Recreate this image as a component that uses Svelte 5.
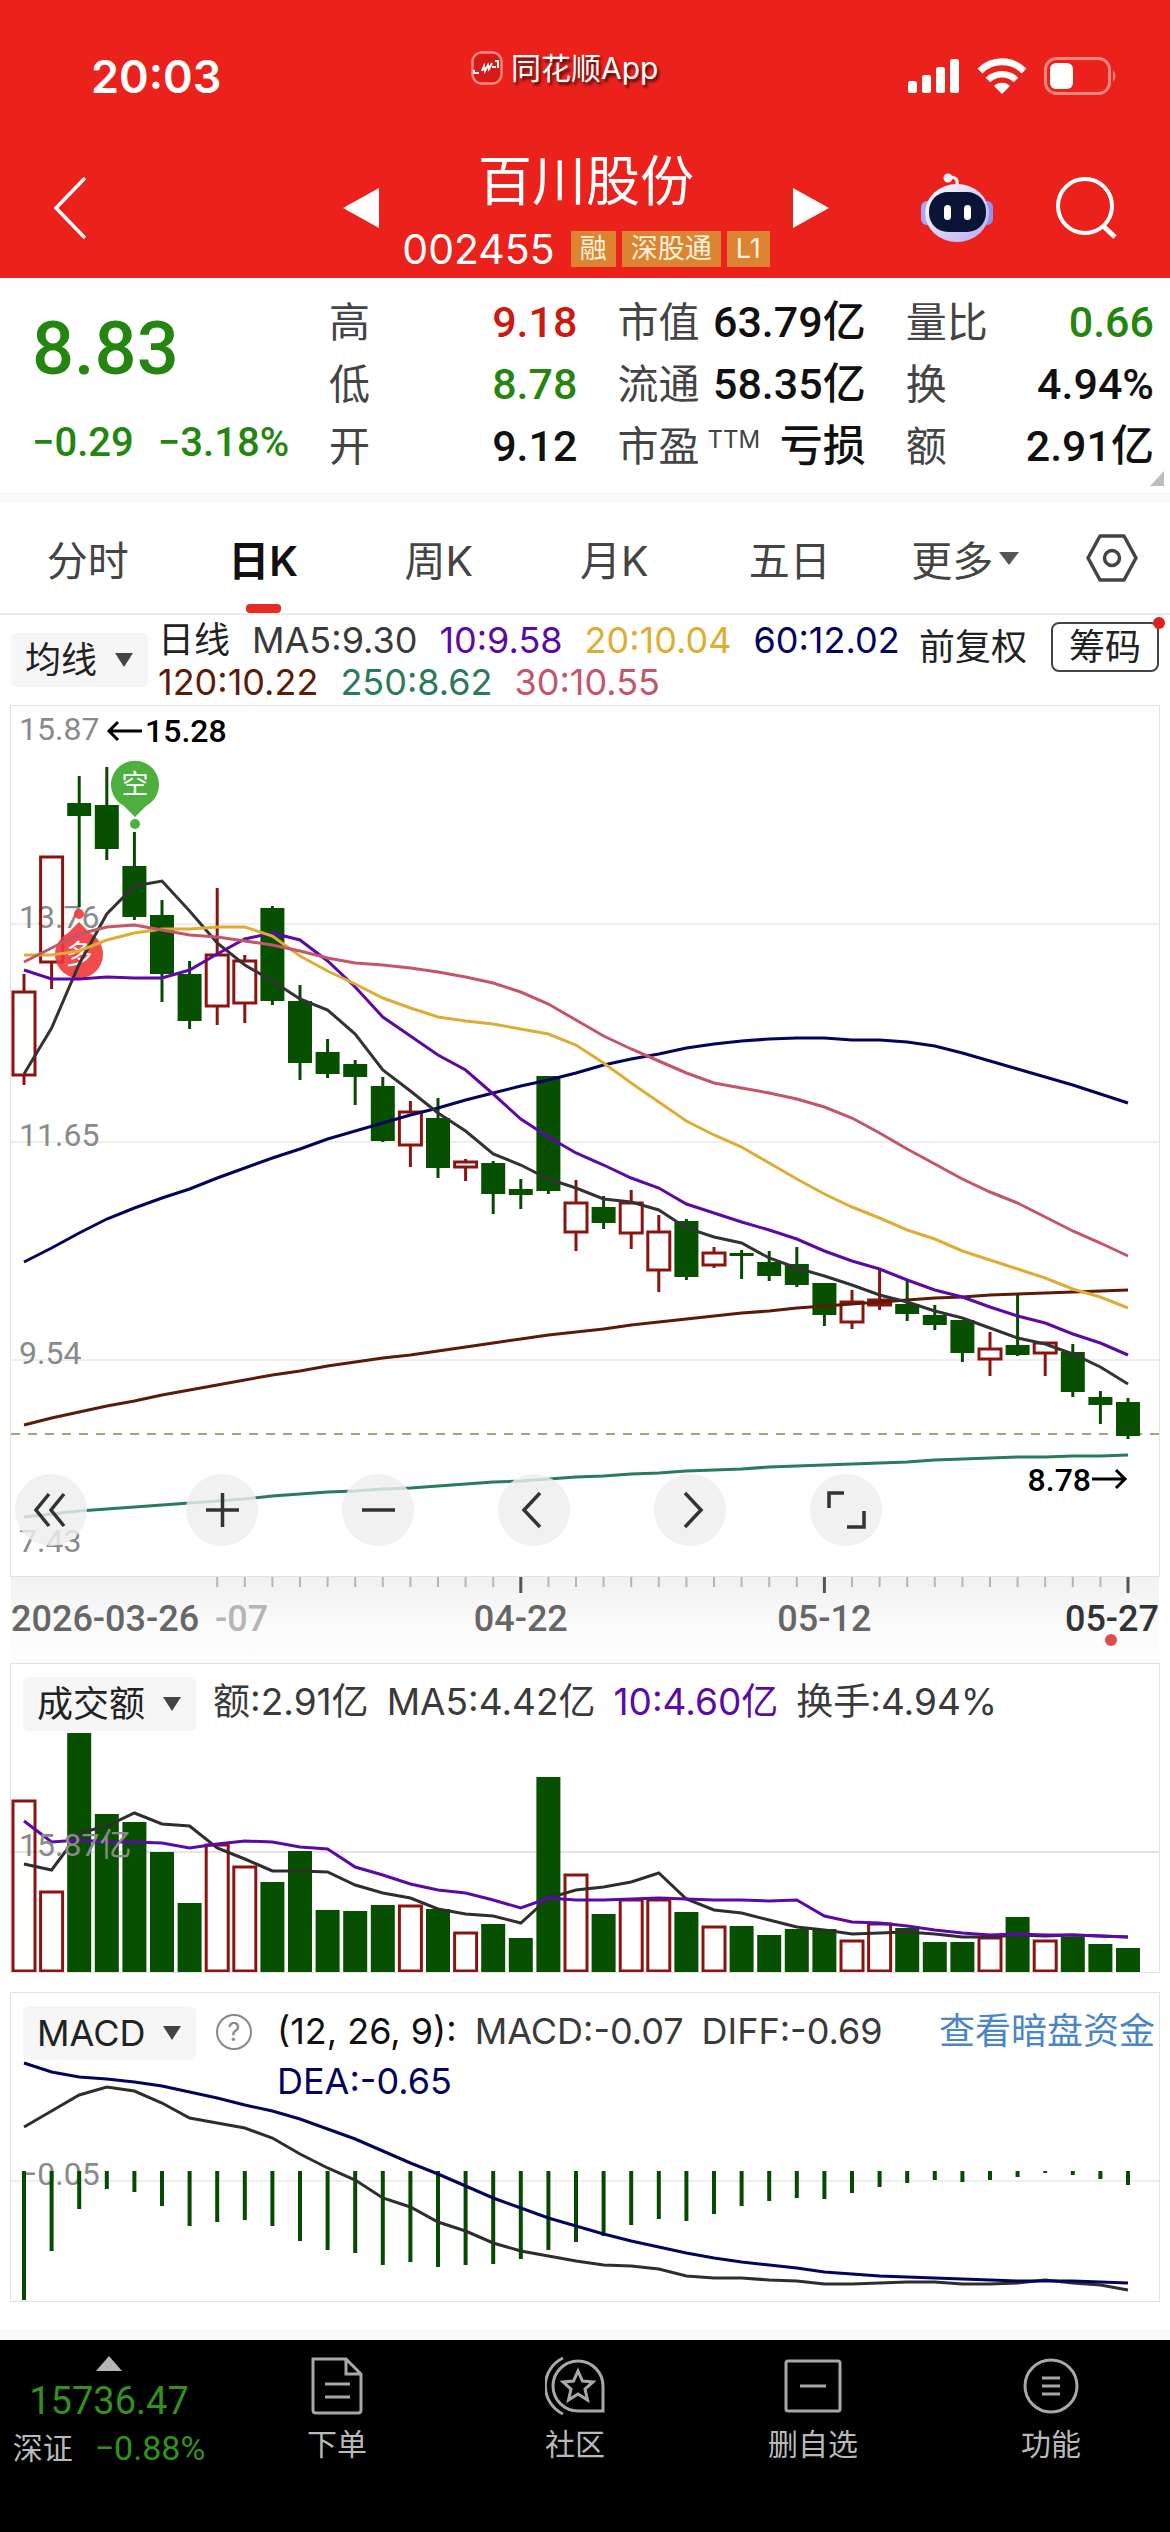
<script lang="ts">
	type Candle = [number, number, number, number, boolean?];

	const X0 = 13;
	const STEP = 27.6;
	const BODY = 24;

	const x = (i: number) => X0 + STEP * i;

	// [body top, body bottom, high, low, rising]
	const candles: Candle[] = [
		[285, 370, 268, 379, true], [150, 257, 150, 283, true], [97, 110, 70, 201], [99, 143, 61, 154],
		[160, 211, 126, 214], [209, 268, 194, 296], [268, 315, 255, 323], [248, 301, 182, 319, true],
		[254, 298, 249, 317, true], [202, 295, 200, 299], [295, 357, 279, 374], [346, 368, 333, 372],
		[358, 371, 354, 399], [380, 435, 371, 436], [405, 440, 395, 461, true], [412, 462, 392, 472],
		[455, 462, 453, 475, true], [457, 488, 455, 508], [483, 489, 473, 503], [370, 485, 370, 488],
		[496, 527, 474, 545, true], [501, 517, 490, 523], [496, 528, 484, 543, true], [525, 565, 509, 586, true],
		[515, 571, 513, 574], [546, 560, 541, 562, true], [547, 550, 544, 573], [556, 570, 545, 575],
		[558, 579, 541, 581], [577, 609, 577, 620], [595, 617, 584, 623, true], [593, 600, 564, 604, true],
		[598, 608, 574, 615], [609, 619, 599, 624], [614, 647, 614, 656], [642, 654, 626, 670, true],
		[639, 649, 589, 650], [636, 648, 636, 670, true], [646, 686, 638, 691], [691, 699, 685, 718],
		[696, 730, 692, 733]
	];

	const ma5 = [368, 322, 258, 208, 180, 175, 205, 237, 259, 275, 293, 304, 328, 364, 385, 407, 425, 448, 459, 473, 482, 493, 496, 504, 522, 531, 537, 552, 562, 570, 579, 589, 596, 605, 612, 622, 632, 638, 648, 661, 678];
	const ma10 = [264, 273, 273, 271, 272, 272, 264, 248, 233, 227, 234, 255, 281, 311, 330, 349, 364, 388, 413, 431, 447, 459, 472, 482, 498, 507, 516, 524, 533, 545, 555, 563, 574, 584, 591, 601, 610, 617, 628, 637, 649];
	const ma20 = [249, 249, 245, 234, 227, 223, 223, 221, 221, 230, 250, 265, 278, 292, 302, 311, 315, 318, 323, 328, 339, 357, 377, 396, 415, 429, 441, 457, 473, 488, 501, 512, 524, 533, 545, 554, 563, 572, 583, 591, 602];
	const ma30 = [256, 242, 228, 221, 219, 224, 229, 231, 235, 239, 245, 252, 257, 259, 262, 266, 271, 277, 286, 298, 314, 330, 343, 355, 367, 377, 382, 387, 393, 401, 412, 427, 443, 458, 473, 486, 497, 511, 525, 537, 550];
	const ma60 = [556, 542, 527, 513, 502, 492, 483, 472, 462, 452, 443, 433, 425, 417, 409, 402, 394, 387, 380, 374, 367, 359, 353, 348, 342, 338, 335, 333, 332, 332, 334, 334, 336, 340, 347, 355, 363, 371, 379, 388, 397];
	const ma120 = [719, 712, 706, 700, 695, 689, 684, 679, 674, 669, 665, 660, 656, 652, 649, 645, 641, 637, 633, 629, 626, 623, 619, 616, 613, 610, 607, 605, 602, 600, 598, 596, 594, 592, 591, 589, 588, 587, 586, 585, 584];
	const ma250 = [811, 808, 805, 803, 801, 799, 797, 795, 793, 790, 788, 786, 785, 783, 782, 780, 778, 776, 775, 773, 771, 770, 768, 767, 765, 764, 763, 761, 760, 759, 758, 757, 756, 754, 753, 752, 751, 751, 750, 750, 749];

	const volumes = [136, 227, 69, 150, 158, 188, 239, 180, 202, 218, 187, 246, 247, 241, 241, 245, 268, 260, 274, 113, 210, 250, 235, 235, 248, 262, 262, 271, 265, 265, 276, 259, 264, 278, 278, 273, 253, 276, 273, 280, 284];
	const vol5 = [200, 206, 169, 162, 149, 160, 162, 184, 195, 207, 207, 208, 221, 229, 234, 245, 250, 252, 259, 234, 226, 223, 218, 209, 235, 246, 249, 256, 263, 266, 270, 269, 268, 270, 273, 273, 271, 272, 271, 272, 273];
	const vol10 = [157, 178, 176, 178, 178, 179, 184, 180, 177, 178, 183, 185, 203, 211, 220, 226, 229, 236, 244, 234, 236, 236, 235, 234, 235, 236, 236, 237, 236, 252, 258, 259, 262, 266, 269, 271, 270, 271, 271, 272, 273];

	const macd = [307, 258, 216, 196, 199, 213, 233, 229, 227, 233, 248, 257, 260, 272, 269, 274, 272, 271, 266, 257, 249, 243, 232, 226, 228, 221, 213, 208, 205, 206, 200, 194, 190, 187, 189, 187, 184, 180, 182, 186, 192];
	const diff = [134, 118, 102, 94, 98, 110, 125, 130, 135, 145, 161, 175, 187, 205, 214, 229, 238, 250, 258, 263, 268, 272, 273, 276, 283, 285, 285, 287, 288, 291, 291, 290, 289, 289, 291, 291, 290, 287, 290, 292, 297];
	const dea = [70, 79, 84, 86, 89, 93, 99, 105, 112, 118, 126, 136, 146, 158, 170, 181, 193, 205, 215, 225, 233, 241, 248, 254, 260, 265, 269, 272, 275, 279, 281, 283, 284, 285, 286, 287, 288, 288, 288, 289, 290];

	const line = (ys: number[]) => ys.map((y, i) => `${x(i).toFixed(1)},${y}`).join(' ');

	const averages = [
		{ values: ma60, color: '#04045c' },
		{ values: ma120, color: '#5a1c08' },
		{ values: ma250, color: '#2a7a5c' },
		{ values: ma5, color: '#333333' },
		{ values: ma10, color: '#5b0aa8' },
		{ values: ma20, color: '#dcae35' },
		{ values: ma30, color: '#c4566a' }
	];

	const priceLabels = [
		{ text: '15.87', y: 34 },
		{ text: '13.76', y: 222 },
		{ text: '11.65', y: 440 },
		{ text: '9.54', y: 658 },
		{ text: '7.43', y: 846 }
	];

	const maLegend = [
		{ text: 'MA5:9.30', color: '#3a3a3a' },
		{ text: '10:9.58', color: '#5b0aa8' },
		{ text: '20:10.04', color: '#dcae35' },
		{ text: '60:12.02', color: '#04045c' },
		{ text: '120:10.22', color: '#5a1c08' },
		{ text: '250:8.62', color: '#2a7a5c' },
		{ text: '30:10.55', color: '#c4566a' }
	];

	const columns = [
		[
			{ label: '高', value: '9.18', tone: 'up' },
			{ label: '低', value: '8.78', tone: 'down' },
			{ label: '开', value: '9.12', tone: '' }
		],
		[
			{ label: '市值', value: '63.79亿', tone: '' },
			{ label: '流通', value: '58.35亿', tone: '' },
			{ label: '市盈', value: '亏损', tone: '', sup: 'TTM' }
		],
		[
			{ label: '量比', value: '0.66', tone: 'down' },
			{ label: '换', value: '4.94%', tone: '' },
			{ label: '额', value: '2.91亿', tone: '' }
		]
	];

	const tabs = ['分时', '日K', '周K', '月K', '五日'];
	let active = $state('日K');

	const controls = [
		{ label: '最早', d: 'M34 20 L21 36 L34 52 M49 20 L36 36 L49 52' },
		{ label: '放大', d: 'M20 36 H53 M36.5 19 V53' },
		{ label: '缩小', d: 'M20 36 H53' },
		{ label: '向左', d: 'M42 19 L26 36 L42 53' },
		{ label: '向右', d: 'M31 19 L47 36 L31 53' },
		{ label: '全屏', d: 'M19 34 V19 H34 M54 37 V53 H37' }
	];
</script>

{#snippet picker(id, text, name)}
	<span class="picker">
		<select {id} aria-label={name}>
			<option>{text}</option>
		</select>
		<svg class="caret" viewBox="0 0 18 14" aria-hidden="true"><path d="M0 0 H18 L9 14 Z" /></svg>
	</span>
{/snippet}

<div class="app">
	<header>
		<div class="status">
			<span class="clock">20:03</span>
			<span class="source">
				<svg width="32" height="34" viewBox="0 0 32 34" aria-hidden="true">
					<rect x="1.5" y="1.5" width="29" height="31" rx="9" fill="#d81a16" stroke="#f7877e" stroke-width="2.5" />
					<path d="M3 19 V22 H8 M11 20 L13 15 L14 20 L17 14 L18 18 L21 12 M21 16 H25 M24 10 H27 V17" fill="none" stroke="#fff" stroke-width="2" />
				</svg>
				同花顺App
			</span>
			<span class="system">
				<svg width="52" height="36" viewBox="0 0 52 36" aria-label="信号">
					<rect x="0" y="23" width="9" height="12" rx="2.5" />
					<rect x="14" y="17" width="9" height="18" rx="2.5" />
					<rect x="28" y="9" width="9" height="26" rx="2.5" />
					<rect x="42" y="1" width="9" height="34" rx="2.5" />
				</svg>
				<svg width="50" height="38" viewBox="0 0 50 38" aria-label="无线网络">
					<path d="M3 14 A31 31 0 0 1 47 14" fill="none" stroke="#fff" stroke-width="7" />
					<path d="M11 23 A20 20 0 0 1 39 23" fill="none" stroke="#fff" stroke-width="6.5" />
					<path d="M25 37 L17 29 A11.5 11.5 0 0 1 33 29 Z" />
				</svg>
				<svg width="74" height="38" viewBox="0 0 74 38" aria-label="电池">
					<rect x="1.5" y="1.5" width="64" height="35" rx="11" fill="none" stroke="#f7877e" stroke-width="3" />
					<path d="M69 13 Q74 19 69 25 Z" fill="#f7877e" />
					<rect x="6" y="6" width="23" height="26" rx="6" />
				</svg>
			</span>
		</div>

		<div class="titlebar">
			<button class="icon back" aria-label="返回">
				<svg width="32" height="62" viewBox="0 0 32 62" fill="none" stroke="#fff" stroke-width="3.5">
					<path d="M31 1 L2 31 L31 61" />
				</svg>
			</button>
			<div class="stock">
				<button class="icon" aria-label="上一只">
					<svg width="36" height="40" viewBox="0 0 36 40"><path d="M0 20 L36 0 V40 Z" fill="#fff" /></svg>
				</button>
				<div class="name">
					<h1>百川股份</h1>
					<div class="code">
						<span class="number">002455</span>
						<span class="tag">融</span>
						<span class="tag">深股通</span>
						<span class="tag">L1</span>
					</div>
				</div>
				<button class="icon" aria-label="下一只">
					<svg width="36" height="40" viewBox="0 0 36 40"><path d="M36 20 L0 0 V40 Z" fill="#fff" /></svg>
				</button>
			</div>
			<div class="actions">
				<button class="icon" aria-label="助手">
					<svg width="74" height="70" viewBox="0 0 74 70">
						<defs>
							<linearGradient id="shell" x1="0" y1="0" x2="1" y2="1">
								<stop offset="0" stop-color="#ffffff" />
								<stop offset="1" stop-color="#b9a8f2" />
							</linearGradient>
						</defs>
						<path d="M36 14 Q40 5 31 4" fill="none" stroke="#fff" stroke-width="3" />
						<circle cx="28" cy="5" r="4.5" fill="#f3eeff" />
						<rect x="1" y="28" width="12" height="24" rx="6" fill="#a7a6f3" />
						<rect x="61" y="28" width="12" height="24" rx="6" fill="#8f93ee" />
						<ellipse cx="37" cy="40" rx="32" ry="29" fill="url(#shell)" />
						<rect x="9" y="19" width="57" height="40" rx="19" fill="#0a1436" />
						<rect x="24" y="32" width="7" height="15" rx="3.5" fill="#fff" />
						<rect x="44" y="32" width="7" height="15" rx="3.5" fill="#fff" />
					</svg>
				</button>
				<button class="icon" aria-label="搜索">
					<svg width="62" height="62" viewBox="0 0 62 62" fill="none" stroke="#fff" stroke-width="4">
						<circle cx="29" cy="29" r="27" />
						<path d="M46 48 L59 60" stroke-width="5" />
					</svg>
				</button>
			</div>
		</div>
	</header>

	<section class="quote">
		<div class="price down">
			<strong>8.83</strong>
			<p><span>−0.29</span><span>−3.18%</span></p>
		</div>
		{#each columns as rows}
			<dl>
				{#each rows as row}
					<div>
						<dt>{row.label}{#if row.sup}<small>{row.sup}</small>{/if}</dt>
						<dd class={row.tone}>{row.value}</dd>
					</div>
				{/each}
			</dl>
		{/each}
		<svg class="corner" width="14" height="15" viewBox="0 0 14 15" aria-hidden="true"><path d="M14 0 V15 H0 Z" fill="#bdbdbd" /></svg>
	</section>

	<nav class="tabs">
		{#each tabs as tab}
			<button class:active={active === tab} onclick={() => (active = tab)}>{tab}</button>
		{/each}
		<button>更多<svg width="20" height="13" viewBox="0 0 20 13" aria-hidden="true"><path d="M0 0 H20 L10 13 Z" fill="#555" /></svg></button>
		<button class="settings" aria-label="设置">
			<svg width="52" height="48" viewBox="0 0 52 48" fill="none" stroke="#444" stroke-width="3.5">
				<path d="M14 2 H38 L50 24 L38 46 H14 L2 24 Z" stroke-linejoin="round" />
				<circle cx="26" cy="24" r="7.5" />
			</svg>
		</button>
	</nav>

	<div class="ma-bar">
		{@render picker('main-indicator', '均线', '主图指标')}
		<div class="legend">
			<span class="period">日线</span>
			{#each maLegend as item}
				<span style="color: {item.color}">{item.text}</span>
			{/each}
		</div>
		<button class="adjust">前复权</button>
		<button class="chips">筹码</button>
	</div>

	<section class="panel">
		<svg class="chart" viewBox="0 0 1148 870" role="img" aria-label="日K线">
			{#each [218, 436, 654] as y}
				<path d="M0 {y} H1148" stroke="#eeeeee" stroke-width="2" />
			{/each}
			<path d="M0 728 H1148" stroke="#a5a57c" stroke-width="2" stroke-dasharray="9 8" />
			{#each priceLabels as label}
				<text class="axis" x="8" y={label.y}>{label.text}</text>
			{/each}
			{#each candles as [top, bottom, high, low, up], i}
				{#if up}
					<path d="M{x(i)} {high} V{top} M{x(i)} {bottom} V{low}" stroke="#8c1410" stroke-width="3" />
					<rect x={x(i) - 11} y={top + 1} width={BODY - 2} height={bottom - top - 2} fill={i === 31 ? '#8c1410' : 'none'} stroke="#8c1410" stroke-width="3" />
				{:else}
					<path d="M{x(i)} {high} V{low}" stroke="#064a02" stroke-width="3" />
					<rect x={x(i) - 12} y={top} width={BODY} height={bottom - top} fill="#075000" />
				{/if}
			{/each}

			<g fill="#4caf3e">
				<path d="M124 111 L113 100 A24 24 0 1 1 135 100 Z" />
				<circle cx="124" cy="118" r="5" />
			</g>
			<text class="pin" x="124" y="88">空</text>
			<g fill="#f0383a" opacity="0.9">
				<path d="M68 216 L57 227 A24 24 0 1 0 79 227 Z" />
				<circle cx="68" cy="208" r="5" />
			</g>
			<text class="pin" x="68" y="258">多</text>

			{#each averages as average}
				<polyline points={line(average.values)} fill="none" stroke={average.color} stroke-width="3" />
			{/each}

			<path d="M131 25 H98 M107 16 L98 25 L107 34" fill="none" stroke="#000" stroke-width="3" />
			<text class="mark" x="134" y="36">15.28</text>
			<text class="mark" x="1080" y="785" text-anchor="end">8.78</text>
			<path d="M1081 773 H1114 M1105 764 L1114 773 L1105 782" fill="none" stroke="#000" stroke-width="3" />
		</svg>
		<div class="controls">
			{#each controls as control}
				<button aria-label={control.label}>
					<svg width="72" height="72" viewBox="0 0 72 72" fill="none" stroke="#333" stroke-width="3.5"><path d={control.d} /></svg>
				</button>
			{/each}
		</div>
	</section>

	<div class="dates">
		<svg class="chart" viewBox="0 0 1148 86" role="img" aria-label="日期">
			{#each candles as _, i}
				{#if i >= 7}
					{@const major = (i - 7) % 11 === 0 && i > 7}
					<path d="M{x(i)} 0 V{major ? 16 : 10}" stroke={major ? '#555' : '#b5b5b5'} stroke-width={major ? 3 : 2} />
				{/if}
			{/each}
			<text class="date" x="0" y="54">2026-03-26</text>
			<text class="date faded" x="204" y="54">-07</text>
			<text class="date" x={x(18)} y="54" text-anchor="middle">04-22</text>
			<text class="date" x={x(29)} y="54" text-anchor="middle">05-12</text>
			<text class="date last" x="1148" y="54" text-anchor="end">05-27</text>
			<circle cx="1100" cy="63" r="6" fill="#e04b4b" />
		</svg>
	</div>

	<section class="panel volume">
		<svg class="chart" viewBox="0 0 1148 308" role="img" aria-label="成交额">
			<path d="M0 188 H1148" stroke="#e4e4e4" stroke-width="2" />
			{#each volumes as top, i}
				{#if candles[i][4]}
					<rect x={x(i) - 11} y={top + 1} width={BODY - 2} height={306 - top} fill="none" stroke="#8c1410" stroke-width="3" />
				{:else}
					<rect x={x(i) - 12} y={top} width={BODY} height={308 - top} fill="#075000" />
				{/if}
			{/each}
			<polyline points={line(vol5)} fill="none" stroke="#2e2e2e" stroke-width="3" />
			<polyline points={line(vol10)} fill="none" stroke="#5b0aa8" stroke-width="3" />
			<text class="axis" x="8" y="192">15.87亿</text>
		</svg>
		<div class="panel-head">
			{@render picker('volume-indicator', '成交额', '副图指标一')}
			<div class="legend">
				<span>额:2.91亿</span>
				<span>MA5:4.42亿</span>
				<span class="purple">10:4.60亿</span>
				<span>换手:4.94%</span>
			</div>
		</div>
	</section>

	<section class="panel">
		<svg class="chart" viewBox="0 0 1148 308" role="img" aria-label="MACD">
			<path d="M0 188 H1148" stroke="#eeeeee" stroke-width="2" />
			<text class="axis" x="8" y="192">−0.05</text>
			{#each macd as bottom, i}
				<path d="M{x(i)} 178 V{bottom}" stroke={i === 37 ? '#8c1410' : '#064a02'} stroke-width="4" />
			{/each}
			<polyline points={line(diff)} fill="none" stroke="#2e2e2e" stroke-width="3" />
			<polyline points={line(dea)} fill="none" stroke="#04045c" stroke-width="3" />
		</svg>
		<div class="panel-head">
			{@render picker('macd-indicator', 'MACD', '副图指标二')}
			<button class="help" aria-label="指标说明">?</button>
			<div class="legend">
				<span class="params">(12, 26, 9):</span>
				<span>MACD:-0.07</span>
				<span>DIFF:-0.69</span>
				<span class="navy">DEA:-0.65</span>
			</div>
			<a href="#funds">查看暗盘资金</a>
		</div>
	</section>

	<footer>
		<button class="index">
			<svg width="26" height="15" viewBox="0 0 26 15" aria-hidden="true"><path d="M13 0 L26 15 H0 Z" fill="#b5b5b5" /></svg>
			<strong>15736.47</strong>
			<span class="change">深证<em>−0.88%</em></span>
		</button>
		<button class="item">
			<svg width="60" height="60" viewBox="0 0 60 60">
				<path d="M6 3 H39 L54 18 V54 Q54 57 51 57 H9 Q6 57 6 54 Z M39 3 V18 H54 M18 28 H43 M18 41 H43" />
			</svg>
			下单
		</button>
		<button class="item">
			<svg width="60" height="60" viewBox="0 0 60 60">
				<path d="M58 55 H33 A25 25 0 1 1 58 30 Z M18 2 A31 31 0 0 0 18 58" />
				<path d="M33 15 L37.5 25 L48 26 L40 33 L42.5 44 L33 38 L23.5 44 L26 33 L18 26 L28.5 25 Z" />
			</svg>
			社区
		</button>
		<button class="item">
			<svg width="60" height="60" viewBox="0 0 60 60">
				<rect x="3" y="5" width="54" height="50" rx="2" />
				<path d="M17 30 H43" />
			</svg>
			删自选
		</button>
		<button class="item">
			<svg width="60" height="60" viewBox="0 0 60 60">
				<circle cx="30" cy="30" r="26" />
				<path d="M21 22 H39 M21 30 H39 M21 38 H39" />
			</svg>
			功能
		</button>
	</footer>
</div>

<style>
	:global(body) {
		margin: 0;
		background: #000;
	}

	.app {
		background: #fff;
		color: #111;
		font-family: Inter, 'Noto Sans CJK SC', sans-serif;
		font-size: 36px;
	}

	button,
	select {
		margin: 0;
		padding: 0;
		border: none;
		background: none;
		color: inherit;
		font: inherit;
		cursor: pointer;
	}

	svg {
		display: block;
		flex-shrink: 0;
	}

	header {
		background: #eb221c;
		color: #fff;
	}

	.status {
		display: flex;
		align-items: center;
		justify-content: space-between;
		height: 138px;
		padding: 8px 52px 0 91px;
		box-sizing: border-box;
		padding-top: 14px;
	}

	.clock {
		font-size: 45px;
		font-weight: 600;
	}

	.source {
		display: flex;
		align-items: center;
		gap: 8px;
		padding-bottom: 16px;
		font-size: 30px;
		line-height: 36px;
		text-shadow: 2px 3px 3px rgba(0, 0, 0, 0.7);
	}

	.system {
		display: flex;
		align-items: center;
		gap: 17px;
		fill: #fff;
	}

	.titlebar {
		display: grid;
		grid-template-columns: 1fr auto 1fr;
		align-items: center;
		height: 140px;
		padding: 0 52px 0 54px;
	}

	.back {
		justify-self: start;
	}

	.stock {
		display: flex;
		align-items: center;
		gap: 23px;
		height: 100%;
	}

	.name {
		display: flex;
		flex-direction: column;
		align-items: center;
		gap: 17px;
	}

	h1 {
		margin: 0;
		font-size: 54px;
		font-weight: 400;
		line-height: 64px;
	}

	.code {
		display: flex;
		align-items: center;
		gap: 6px;
		height: 36px;
	}

	.number {
		margin-right: 10px;
		font-size: 41px;
	}

	.tag {
		padding: 0 9px;
		background: #dd8433;
		color: #fff3dc;
		font-size: 27px;
		line-height: 36px;
	}

	.actions {
		display: flex;
		align-items: center;
		justify-content: flex-end;
		gap: 62px;
	}

	.quote {
		position: relative;
		display: flex;
		gap: 40px;
		padding: 13px 16px 15px 32px;
		border-bottom: 11px solid #fafafa;
	}

	.price {
		flex: 0 0 253px;
		padding-top: 16px;
		font-family: Roboto, sans-serif;
		white-space: nowrap;
	}

	.price strong {
		display: block;
		font-size: 74px;
		font-weight: 500;
		line-height: 84px;
	}

	.price p {
		display: flex;
		gap: 24px;
		margin: 22px 0 0;
		font-size: 40px;
		font-weight: 500;
		line-height: 60px;
	}

	dl {
		flex: 1;
		margin: 0;
	}

	dl div {
		display: flex;
		justify-content: space-between;
		line-height: 62px;
		white-space: nowrap;
	}

	dt {
		display: flex;
		color: #444;
		font-size: 41px;
	}

	dt small {
		margin-left: 8px;
		font-size: 24px;
		line-height: 50px;
	}

	dd {
		margin: 0;
		font-family: Roboto, 'Noto Sans CJK SC', sans-serif;
		font-size: 43px;
		font-weight: 500;
	}

	.up {
		color: #cc1a10;
	}

	.down {
		color: #25860f;
	}

	.corner {
		position: absolute;
		right: 6px;
		bottom: 6px;
	}

	.tabs {
		display: grid;
		grid-template-columns: repeat(6, 3fr) 2fr;
		height: 110px;
		border-bottom: 2px solid #ececec;
	}

	.tabs button {
		position: relative;
		display: flex;
		align-items: center;
		justify-content: center;
		gap: 6px;
		color: #444;
		font-size: 41px;
	}

	.tabs .active {
		color: #111;
		font-weight: 600;
	}

	.active::after {
		content: '';
		position: absolute;
		bottom: 0;
		width: 35px;
		height: 9px;
		border-radius: 4px;
		background: #e62c20;
	}

	.ma-bar {
		display: flex;
		align-items: flex-start;
		min-height: 84px;
		padding: 4px 11px 2px;
	}

	.ma-bar .picker {
		margin-top: 14px;
	}

	.picker {
		display: inline-grid;
		align-items: center;
		flex-shrink: 0;
		border-radius: 6px;
		background: #f6f6f6;
	}

	.picker select,
	.picker .caret {
		grid-area: 1 / 1;
	}

	.picker select {
		appearance: none;
		height: 54px;
		padding: 0 50px 0 14px;
		color: #222;
		font-size: 36px;
	}

	.caret {
		justify-self: end;
		width: 18px;
		margin-right: 15px;
		fill: #444;
		pointer-events: none;
	}

	.legend {
		display: flex;
		flex: 1;
		flex-wrap: wrap;
		column-gap: 18px;
		color: #3a3a3a;
		white-space: nowrap;
	}

	.ma-bar .legend {
		column-gap: 22px;
		margin-left: 10px;
		font-size: 36px;
		line-height: 42px;
	}

	.period {
		color: #222;
	}

	.adjust,
	.chips {
		height: 50px;
		margin-top: 3px;
		color: #222;
		font-size: 36px;
		line-height: 46px;
		white-space: nowrap;
	}

	.chips {
		position: relative;
		margin-left: 24px;
		padding: 0 16px;
		border: 2px solid #444;
		border-radius: 8px;
	}

	.chips::after {
		content: '';
		position: absolute;
		top: -7px;
		right: -8px;
		width: 12px;
		height: 12px;
		border-radius: 50%;
		background: #e0211b;
	}

	.panel {
		position: relative;
		display: grid;
		margin: 0 10px;
		border: 1px solid #e2e2e2;
	}

	.chart {
		grid-area: 1 / 1;
		width: 100%;
	}

	.chart text {
		font-family: Roboto, 'Noto Sans CJK SC', sans-serif;
		font-size: 32px;
	}

	.axis {
		fill: #8a8a8a;
	}

	.chart .mark {
		font-weight: 500;
	}

	.chart .pin {
		fill: #fff;
		font-size: 27px;
		text-anchor: middle;
	}

	.chart .date {
		fill: #666;
		font-size: 36px;
		font-weight: 500;
	}

	.chart .faded {
		fill: #b5b5b5;
	}

	.chart .last {
		fill: #333;
	}

	.controls {
		position: absolute;
		bottom: 30px;
		left: 4px;
		display: flex;
		gap: 84px;
	}

	.controls button {
		border-radius: 50%;
		background: rgba(238, 238, 238, 0.82);
	}

	.controls button:first-child {
		margin-right: 15px;
	}

	.dates {
		margin: 0 11px;
		background: linear-gradient(#f1f1f1, #fbfbfb 60%, #fdfdfd);
	}

	.volume {
		margin-bottom: 19px;
	}

	.panel-head {
		grid-area: 1 / 1;
		z-index: 1;
		display: flex;
		align-items: flex-start;
		align-self: start;
		padding: 13px 4px 0 12px;
		line-height: 50px;
	}

	.panel-head .legend {
		margin-left: 17px;
		font-size: 36px;
	}

	.volume .legend {
		font-size: 37px;
	}

	.panel-head a {
		color: #4a86c5;
		text-decoration: none;
		white-space: nowrap;
	}

	.purple {
		color: #5b0aa8;
	}

	.navy {
		color: #04045c;
	}

	.params {
		color: #111;
	}

	.help {
		flex-shrink: 0;
		width: 36px;
		height: 36px;
		margin: 8px 8px 0 20px;
		border: 2px solid #888;
		border-radius: 50%;
		color: #888;
		font-size: 25px;
		line-height: 30px;
	}

	footer {
		display: flex;
		margin-top: 27px;
		padding: 16px 0 66px;
		border-top: 11px solid #fafafa;
		background: #000;
		color: #b9b9b9;
	}

	.index {
		display: flex;
		flex: 0 0 218px;
		flex-direction: column;
		align-items: center;
	}

	.index strong {
		margin-top: 7px;
		color: #33901c;
		font-family: Roboto, sans-serif;
		font-size: 38px;
		font-weight: 400;
		line-height: 46px;
	}

	.change {
		display: flex;
		gap: 22px;
		font-size: 30px;
		line-height: 48px;
	}

	.change em {
		color: #33901c;
		font-family: Roboto, sans-serif;
		font-size: 34px;
		font-style: normal;
	}

	.item {
		display: flex;
		flex: 1;
		flex-direction: column;
		align-items: center;
		gap: 8px;
		font-size: 30px;
		line-height: 40px;
	}

	.item svg {
		fill: none;
		stroke: #a8a8a8;
		stroke-width: 3;
	}
</style>
